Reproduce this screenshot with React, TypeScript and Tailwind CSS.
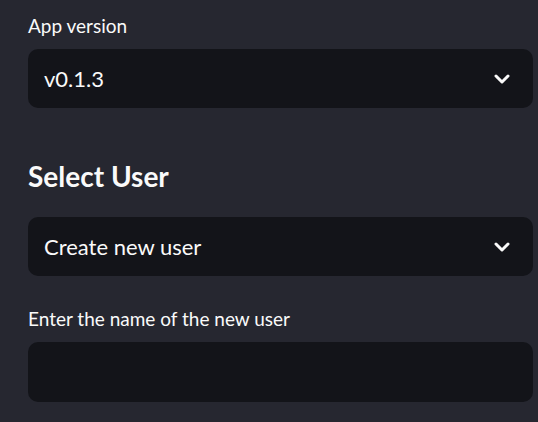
import { ChevronDown } from 'lucide-react';

function SelectBox({ value }: { value: string }) {
  return (
    <div className="flex h-[59px] items-center justify-between rounded-[10px] bg-[#131419] pl-4 pr-[19px]">
      <span className="text-[22px] text-[#fafafa]">{value}</span>
      <ChevronDown className="h-6 w-6 text-[#fafafa]" strokeWidth={3} />
    </div>
  );
}

export default function App() {
  return (
    <div
      className="h-[422px] w-[538px] overflow-hidden bg-[#262730] pl-[28px] pr-[5px] pt-[13px] text-[#fafafa]"
      style={{ fontFamily: 'Lato, "Noto Sans", sans-serif' }}
    >
      <div className="flex flex-col">
        <label className="mb-[10px] text-[19px] leading-[26px]">App version</label>
        <SelectBox value="v0.1.3" />
        <h2 className="mt-[48px] mb-[21px] text-[28px] font-bold leading-[40px]">Select User</h2>
        <SelectBox value="Create new user" />
        <label className="mt-[30px] mb-[10px] text-[19px] leading-[26px]">Enter the name of the new user</label>
        <div className="h-[60px] rounded-[10px] bg-[#131419]" />
      </div>
    </div>
  );
}
